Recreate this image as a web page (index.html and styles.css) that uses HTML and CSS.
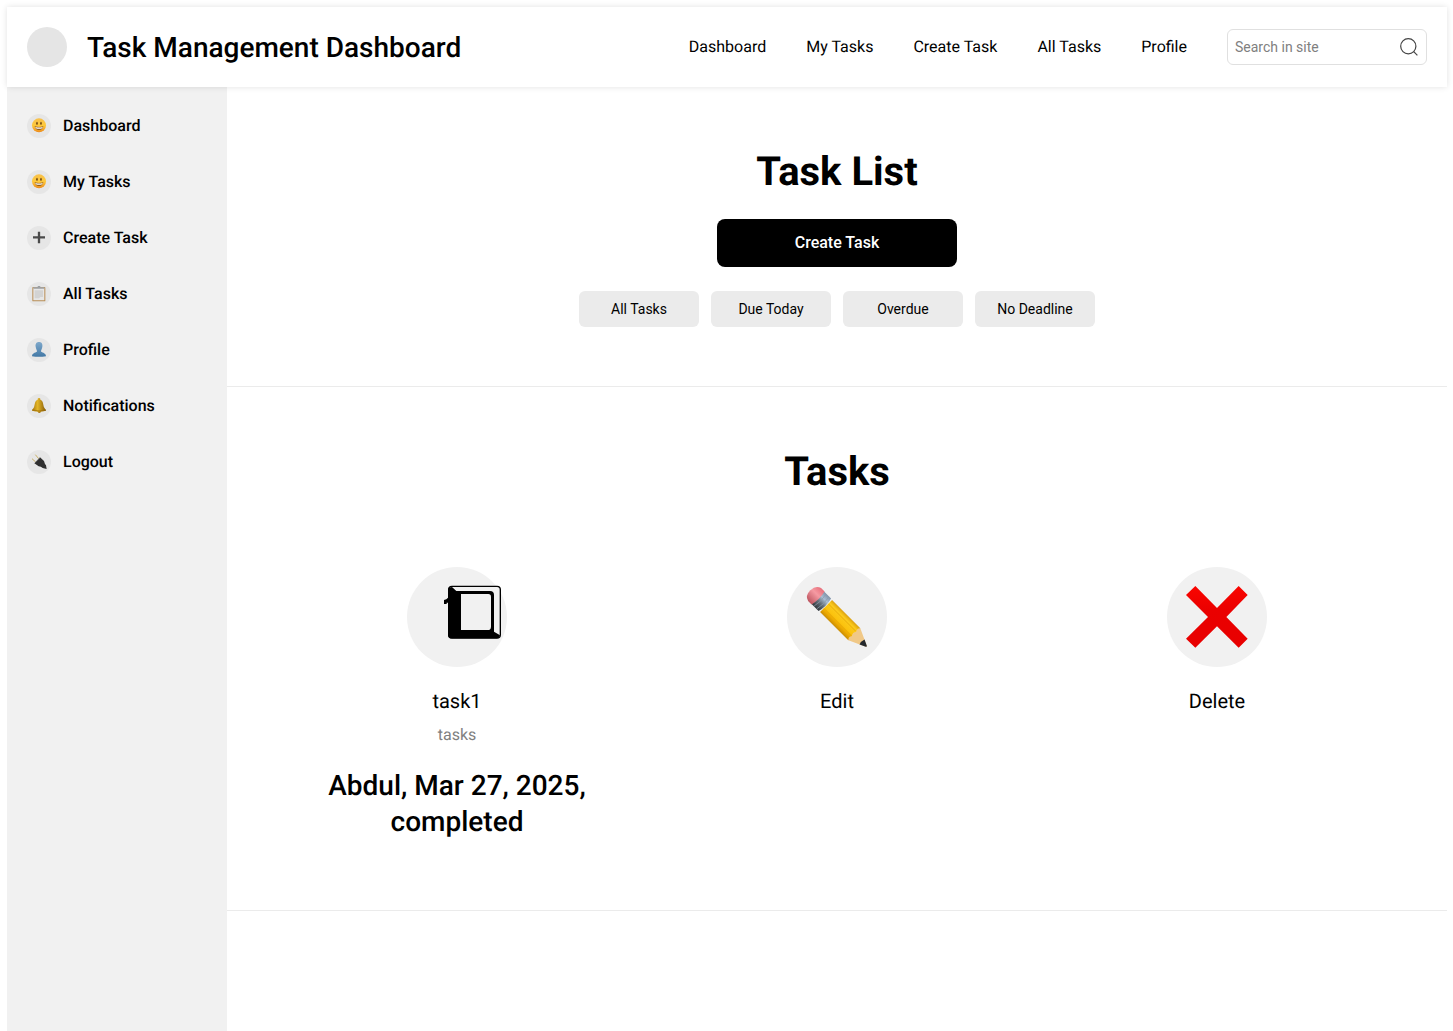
FILE: index.html
```html
<!DOCTYPE html>
<html lang="en">
<head>
<meta charset="utf-8">
<meta name="viewport" content="width=device-width, initial-scale=1">
<title>Task Management Dashboard</title>
<link rel="stylesheet" href="styles.css">
</head>
<body>
<svg class="defs" aria-hidden="true">
  <defs>
    <linearGradient id="face" x1="0" y1="0" x2="0" y2="1"><stop offset="0" stop-color="#f8c04a"/><stop offset=".5" stop-color="#fdc93c"/><stop offset="1" stop-color="#ec8a1c"/></linearGradient>
    <linearGradient id="bust" x1="0" y1="0" x2="0" y2="1"><stop offset="0" stop-color="#7ea8cb"/><stop offset="1" stop-color="#4278a5"/></linearGradient>
    <linearGradient id="brass" x1="0" y1="0" x2="1" y2="0"><stop offset="0" stop-color="#a5740e"/><stop offset=".4" stop-color="#e3b526"/><stop offset="1" stop-color="#835907"/></linearGradient>
    <linearGradient id="cross" x1="0" y1="0" x2="0" y2="1"><stop offset="0" stop-color="#fa0500"/><stop offset=".4" stop-color="#ea0000"/><stop offset="1" stop-color="#e80000"/></linearGradient>
    <linearGradient id="wood" x1="0" y1="0" x2="0" y2="1"><stop offset="0" stop-color="#dba010"/><stop offset=".22" stop-color="#fccb1c"/><stop offset=".6" stop-color="#fbc20e"/><stop offset=".75" stop-color="#f0ad00"/><stop offset="1" stop-color="#c98c05"/></linearGradient>
    <linearGradient id="ferrule" x1="0" y1="0" x2="0" y2="1"><stop offset="0" stop-color="#7f93aa"/><stop offset=".3" stop-color="#a9bdd3"/><stop offset=".6" stop-color="#66717c"/><stop offset="1" stop-color="#30353a"/></linearGradient>
    <linearGradient id="eraser" x1="0" y1="0" x2="0" y2="1"><stop offset="0" stop-color="#e8707c"/><stop offset=".4" stop-color="#f59aa2"/><stop offset="1" stop-color="#bd5560"/></linearGradient>
    <symbol id="smiley" viewBox="0 0 72 72">
      <circle cx="36" cy="34" r="21" fill="url(#face)"/>
      <ellipse cx="30" cy="28" rx="2.300" ry="5" fill="#6b4210"/>
      <ellipse cx="42" cy="28" rx="2.300" ry="5" fill="#6b4210"/>
      <path d="M23 37Q36 41 49 37Q47 48 36 48Q25 48 23 37Z" fill="#8a5a1c"/>
      <path d="M25 39Q36 42 47 39L46 43Q36 46 26 43Z" fill="#fff"/>
    </symbol>
  </defs>
</svg>
<header class="topbar">
  <span class="avatar"></span>
  <p class="brand">Task Management Dashboard</p>
  <nav class="topnav" aria-label="Main">
    <a href="#dashboard">Dashboard</a>
    <a href="#my-tasks">My Tasks</a>
    <a href="#create">Create Task</a>
    <a href="#all">All Tasks</a>
    <a href="#profile">Profile</a>
  </nav>
  <form class="search" role="search">
    <input type="search" aria-label="Search in site" placeholder="Search in site">
    <svg width="20" height="20" viewBox="0 0 20 20" fill="none" stroke="#444" stroke-width="1.2" aria-hidden="true"><circle cx="9.3" cy="9.3" r="7.6"/><path d="M14.7 14.7L18.4 18.4"/></svg>
  </form>
</header>
<div class="layout">
  <nav class="sidebar" aria-label="Sidebar">
    <a href="#dashboard"><svg class="badge" aria-hidden="true"><use href="#smiley"/></svg>Dashboard</a>
    <a href="#my-tasks"><svg class="badge" aria-hidden="true"><use href="#smiley"/></svg>My Tasks</a>
    <a href="#create"><svg class="badge" viewBox="0 0 72 72" aria-hidden="true"><path d="M36 17V52M18 34H54" stroke="#4a4a4a" stroke-width="7"/></svg>Create Task</a>
    <a href="#all"><svg class="badge" viewBox="0 0 72 72" aria-hidden="true"><rect x="16" y="15" width="39" height="43" rx="2" fill="#b98e56"/><path d="M19 17H52V55H19Z" fill="#e6e6e6"/><path d="M23 25H48V45H40L36 49H23Z" fill="#d3d3d3"/><path d="M19 20V16H31L33 12H39L41 16H52V20Z" fill="#9da0a3"/></svg>All Tasks</a>
    <a href="#profile"><svg class="badge" viewBox="0 0 72 72" aria-hidden="true"><path d="M36 12C27 12 25 19 26 26C27 33 30 36 30 40C30 44 15 44 15 55Q36 58 57 55C57 44 42 44 42 40C42 36 45 33 46 26C47 19 45 12 36 12Z" fill="url(#bust)"/></svg>Profile</a>
    <a href="#notifications"><svg class="badge" viewBox="0 0 72 72" aria-hidden="true"><circle cx="37" cy="52" r="5" fill="#a87412"/><path d="M36 12C32 12 32 15 32 17C23 20 24 31 21 40C19 45 14 47 15 50Q36 56 57 50C58 47 53 45 51 40C48 31 49 20 40 17C40 15 40 12 36 12Z" fill="url(#brass)"/><path d="M17 48Q36 54 55 48" fill="none" stroke="#9a6b0a" stroke-width="2"/></svg>Notifications</a>
    <a href="#logout"><svg class="badge" viewBox="0 0 72 72" aria-hidden="true"><path d="M15 26L26 36M25 14L35 26" stroke="#c8b16a" stroke-width="3"/><path d="M22 40L39 22L51 33Q53 42 57 46L59 57L47 54Q42 49 35 49Z" fill="#2f2f2f"/><path d="M24 39L39 24" stroke="#555" stroke-width="3"/></svg>Logout</a>
  </nav>
  <main class="content">
    <section class="panel">
      <h1>Task List</h1>
      <button class="primary" type="button">Create Task</button>
      <div class="filters">
        <button type="button">All Tasks</button>
        <button type="button">Due Today</button>
        <button type="button">Overdue</button>
        <button type="button">No Deadline</button>
      </div>
    </section>
    <section class="panel">
      <h2>Tasks</h2>
      <div class="cards">
        <article class="card">
          <svg class="picture" viewBox="30 30 300 300" aria-hidden="true">
            <path d="M141 129Q149 127 153 122H158V137H149V141H141Z"/>
            <rect x="155" y="88" width="155" height="155" rx="10" fill="#f1f1f1" stroke="#000" stroke-width="4"/>
            <path d="M155 92L165 90L178 102H279Q291 102 291 114V224L309 235Q307 244 300 244H164Q153 244 153 233V97Z"/>
            <path d="M192 111H274Q282 111 282 119V209Q282 219 272 219H192Z" fill="#f1f1f1"/>
          </svg>
          <h3>task1</h3>
          <p class="note">tasks</p>
          <p class="meta">Abdul, Mar 27, 2025, completed</p>
        </article>
        <article class="card">
          <svg class="picture" viewBox="30 30 300 300" aria-hidden="true">
            <g transform="translate(106 106) rotate(45) scale(1.06)">
              <path d="M55 -24H168L168 24H55Z" fill="url(#wood)"/>
              <path d="M55 -9H164M55 9H164" stroke="#e3a307" stroke-width="2"/>
              <path d="M168 -24L216 -2Q219 0 216 2L168 24Q160 16 167 9Q160 0 167 -9Q160 -16 168 -24Z" fill="#f0c887"/>
              <path d="M199 -10L216 -2Q219 0 216 2L199 10Q195 0 199 -10Z" fill="#24282d"/>
              <path d="M20 -25H50Q57 0 50 25H20Z" fill="url(#ferrule)"/>
              <path d="M31 -24Q37 0 31 24M42 -24Q48 0 42 24" fill="none" stroke="#8b9aab" stroke-width="2"/>
              <path d="M23 -26Q29 0 23 26H9Q-8 22 -8 0Q-8 -22 9 -26Z" fill="url(#eraser)"/>
            </g>
          </svg>
          <h3>Edit</h3>
        </article>
        <article class="card">
          <svg class="picture" viewBox="30 30 300 300" aria-hidden="true"><path d="M115 87L180 153L245 87L272 114L208 180L272 245L245 272L180 208L115 272L87 245L153 180L87 114Z" fill="url(#cross)"/></svg>
          <h3>Delete</h3>
        </article>
      </div>
    </section>
  </main>
</div>
</body>
</html>
```
FILE: styles.css
```css
* {
  box-sizing: border-box;
}

body {
  display: flex;
  flex-direction: column;
  min-height: 100vh;
  margin: 0;
  padding: 7px 6px 0 7px;
  background: #fff;
  color: #000;
  font: 400 16px/24px Roboto, "Liberation Sans", sans-serif;
  text-rendering: geometricPrecision;
}

h1, h2, h3, p {
  margin: 0;
}

a {
  color: inherit;
  text-decoration: none;
}

button {
  border: 0;
  color: inherit;
  font: inherit;
  cursor: pointer;
}

.defs {
  position: absolute;
  width: 0;
  height: 0;
}

.topbar {
  display: flex;
  align-items: center;
  padding: 20px;
  background: #fff;
  box-shadow: 0 0 6px rgba(0, 0, 0, 0.12);
  z-index: 1;
}

.avatar {
  width: 40px;
  height: 40px;
  margin-right: 20px;
  border-radius: 50%;
  background: #e5e5e5;
}

.brand {
  padding-top: 2px;
  font-size: 28px;
  font-weight: 500;
  line-height: 36px;
}

.topnav {
  display: flex;
  gap: 40px;
  margin: 0 40px 0 auto;
}

.search {
  display: flex;
  align-items: center;
  width: 200px;
  height: 36px;
  padding: 0 7px;
  border: 1px solid #e0e0e0;
  border-radius: 6px;
}

.search input {
  flex: 1;
  min-width: 0;
  padding: 0;
  border: 0;
  outline: 0;
  background: none;
  font: inherit;
  font-size: 14px;
  line-height: 20px;
}

.search input::placeholder {
  color: #808080;
}

.layout {
  display: flex;
  flex: 1;
}

.sidebar {
  display: flex;
  flex-direction: column;
  gap: 30px;
  width: 220px;
  padding: 26px 20px;
  background: #f1f1f1;
  font-weight: 500;
  line-height: 26px;
}

.sidebar a {
  display: flex;
  align-items: center;
  gap: 12px;
}

.badge {
  width: 24px;
  height: 24px;
  border-radius: 50%;
  background: #e6e6e6;
}

.content {
  flex: 1;
}

.panel {
  display: flex;
  flex-direction: column;
  align-items: center;
  padding: 60px 60px 59px;
  border-bottom: 1px solid #ebebeb;
}

h1, h2 {
  font-size: 40px;
  font-weight: 700;
  line-height: 50px;
}

.primary {
  width: 240px;
  height: 48px;
  margin: 22px 0 24px;
  border-radius: 8px;
  background: #000;
  color: #fff;
  font-weight: 500;
}

.filters {
  display: flex;
  gap: 12px;
}

.filters button {
  width: 120px;
  height: 36px;
  padding: 0;
  border-radius: 6px;
  background: #ebebeb;
  font-size: 14px;
}

.cards {
  display: grid;
  grid-template-columns: repeat(3, 1fr);
  gap: 40px;
  width: 100%;
  margin-top: 58px;
}

.card {
  display: flex;
  flex-direction: column;
  align-items: center;
  padding: 12px 12px 11px;
  text-align: center;
}

.picture {
  width: 100px;
  height: 100px;
  border-radius: 50%;
  background: #f1f1f1;
  overflow: visible;
}

h3 {
  margin-top: 20px;
  font-size: 20px;
  font-weight: 400;
  line-height: 28px;
}

.note {
  margin: 8px 0 21px;
  color: #808080;
}

.meta {
  font-size: 28px;
  font-weight: 500;
  line-height: 36px;
}
```
